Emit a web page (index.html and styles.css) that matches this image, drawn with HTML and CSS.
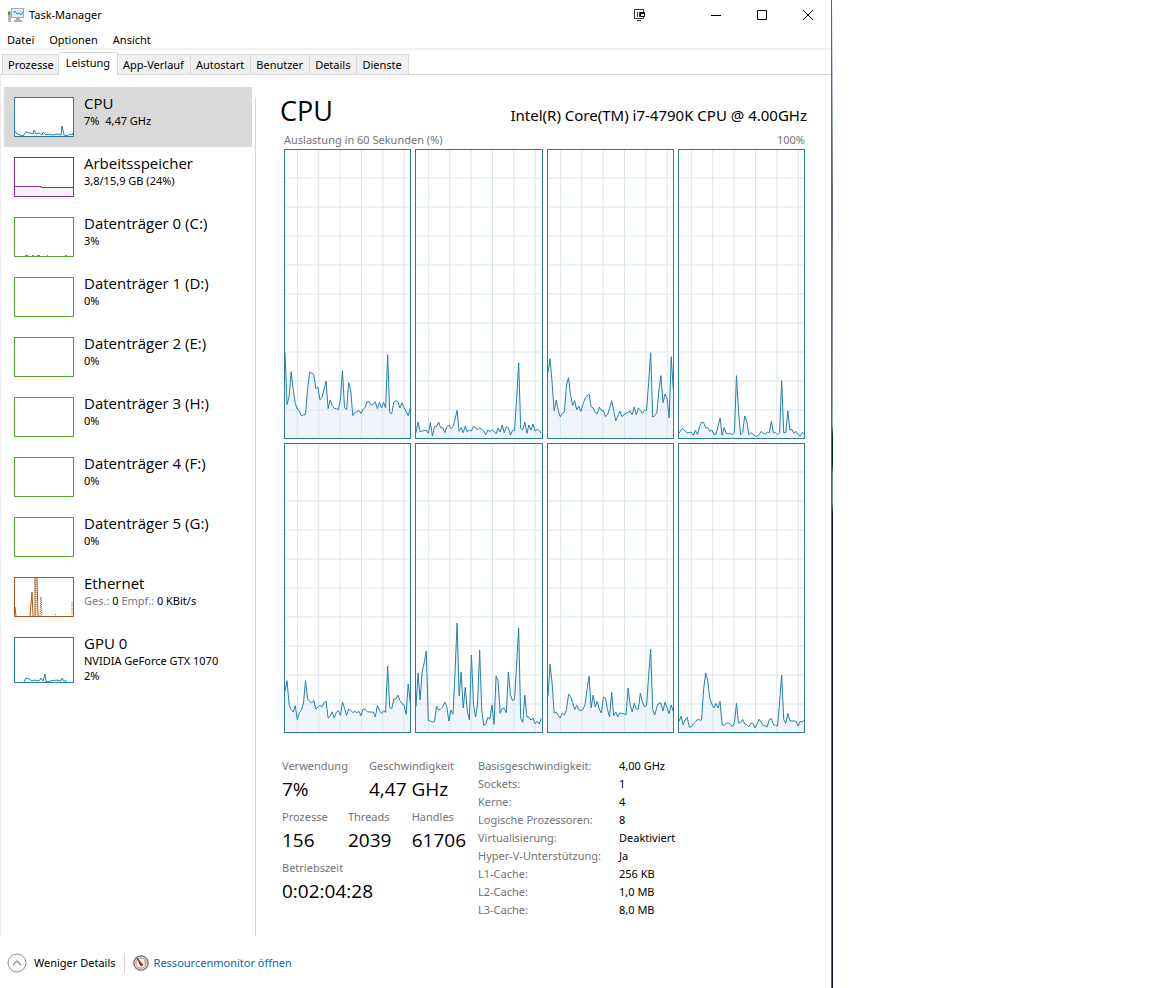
FILE: index.html
```
<!DOCTYPE html>
<html lang="de">
<head>
	<meta charset="UTF-8">
	<title>Task-Manager</title>
	<link rel="stylesheet" href="styles.css">
	<script src="charts.js" defer></script>
</head>
<body>
	<div class="window">
		<header class="titlebar">
			<svg class="app-icon" viewBox="0 0 16 15">
				<rect x="0" y="3" width="3" height="11" fill="#b5b9bb"/>
				<rect x="0" y="4" width="2" height="3" fill="#4f8a4c"/>
				<rect x="3.500" y="0.500" width="12" height="9" fill="#d8eefa" stroke="#a3abb0"/>
				<path d="M5 5l2-2 2 3 2-1 2 2 2-3" fill="none" stroke="#2388c5"/>
				<path d="M8 10h4v2h2v2H6v-2h2z" fill="#a8acae"/>
			</svg>
			<h1>Task-Manager</h1>
			<button class="win-btn feedback" aria-label="Feedback">
				<svg viewBox="0 0 12 12"><path d="M.5 .5h9v3M.5 .5v9h9v-2M3.500 3v5M5.500 3v5M3 11.500h4" fill="none" stroke="#333"/><path d="M6.500 3.500h4v4h-4z" fill="#fff" stroke="#000"/><path d="M6 3h5v2H6z"/></svg>
			</button>
			<button class="win-btn" aria-label="Minimieren">
				<svg viewBox="0 0 12 12"><path d="M1 6.500h10" stroke="#000"/></svg>
			</button>
			<button class="win-btn" aria-label="Maximieren">
				<svg viewBox="0 0 12 12"><path d="M1.500 1.500h9v9h-9z" fill="none" stroke="#000"/></svg>
			</button>
			<button class="win-btn" aria-label="Schließen">
				<svg viewBox="0 0 12 12"><path d="M1 1l10 10M11 1L1 11" stroke="#000"/></svg>
			</button>
		</header>

		<nav class="menu">
			<button>Datei</button>
			<button>Optionen</button>
			<button>Ansicht</button>
		</nav>

		<div class="tabs" role="tablist">
			<button role="tab">Prozesse</button>
			<button role="tab" class="active" aria-selected="true">Leistung</button>
			<button role="tab">App-Verlauf</button>
			<button role="tab">Autostart</button>
			<button role="tab">Benutzer</button>
			<button role="tab">Details</button>
			<button role="tab">Dienste</button>
		</div>

		<div class="content">
			<ul class="sidebar">
				<li><button class="item selected">
					<svg class="thumb blue" viewBox="0 0 58 38"><path d="M0 33l2 3 3 1 3 1 3-4 4 1 3 1 1-4 2 4 3-1 3 2 1-3 3 3 3-1 4 1 4-1 4 1 1-9 2 9 3 1 3-2 2 1 1-2"/></svg>
					<span class="info"><b>CPU</b><small>7%&nbsp; 4,47 GHz</small></span>
				</button></li>
				<li><button class="item">
					<svg class="thumb purple" viewBox="0 0 58 38"><path class="fill" d="M0 28.500h26v1h32V38H0z"/><path d="M0 28.500h26v1h32"/></svg>
					<span class="info"><b>Arbeitsspeicher</b><small>3,8/15,9 GB (24%)</small></span>
				</button></li>
				<li><button class="item">
					<svg class="thumb green" viewBox="0 0 58 38"><path d="M10 37.500h3M17 37.500h2M22 37.500h3M32 37.500h1M50 37.500h2"/></svg>
					<span class="info"><b>Datenträger 0 (C:)</b><small>3%</small></span>
				</button></li>
				<li><button class="item">
					<svg class="thumb green" viewBox="0 0 58 38"></svg>
					<span class="info"><b>Datenträger 1 (D:)</b><small>0%</small></span>
				</button></li>
				<li><button class="item">
					<svg class="thumb green" viewBox="0 0 58 38"></svg>
					<span class="info"><b>Datenträger 2 (E:)</b><small>0%</small></span>
				</button></li>
				<li><button class="item">
					<svg class="thumb green" viewBox="0 0 58 38"></svg>
					<span class="info"><b>Datenträger 3 (H:)</b><small>0%</small></span>
				</button></li>
				<li><button class="item">
					<svg class="thumb green" viewBox="0 0 58 38"></svg>
					<span class="info"><b>Datenträger 4 (F:)</b><small>0%</small></span>
				</button></li>
				<li><button class="item">
					<svg class="thumb green" viewBox="0 0 58 38"></svg>
					<span class="info"><b>Datenträger 5 (G:)</b><small>0%</small></span>
				</button></li>
				<li><button class="item">
					<svg class="thumb orange" viewBox="0 0 58 38"><path d="M0 29l1 9M15 38l2-24 1 24M20 38V0M22 0l1 38"/><path stroke-dasharray="1 1" d="M21 0v38M25 38l1-19 1 19M40 36l1 1M57 24v14"/></svg>
					<span class="info"><b>Ethernet</b><small><i>Ges.:</i> 0 <i>Empf.:</i> 0 KBit/s</small></span>
				</button></li>
				<li><button class="item">
					<svg class="thumb blue tall" viewBox="0 0 58 44"><path d="M9 44l2-4 3 1 3 2 3-1 2 1 3-1 1-2 2 3 2-7 1 8 5-1 1-1 1 1 3-1 5 1 1-3 2 3h3"/></svg>
					<span class="info"><b>GPU 0</b><small>NVIDIA GeForce GTX 1070<br>2%</small></span>
				</button></li>
			</ul>

			<main class="detail">
				<div class="heading">
					<h2>CPU</h2>
					<span>Intel(R) Core(TM) i7-4790K CPU @ 4.00GHz</span>
				</div>
				<div class="caption"><span>Auslastung in 60 Sekunden (%)</span><span>100%</span></div>

				<div class="charts" id="charts"></div>

				<div class="stats">
					<div class="live">
						<dl>
							<div class="wide"><dt>Verwendung</dt><dd>7%</dd></div>
							<div><dt>Geschwindigkeit</dt><dd>4,47 GHz</dd></div>
						</dl>
						<dl>
							<div><dt>Prozesse</dt><dd>156</dd></div>
							<div><dt>Threads</dt><dd>2039</dd></div>
							<div><dt>Handles</dt><dd>61706</dd></div>
						</dl>
						<dl>
							<div><dt>Betriebszeit</dt><dd>0:02:04:28</dd></div>
						</dl>
					</div>
					<dl class="specs">
						<dt>Basisgeschwindigkeit:</dt><dd>4,00 GHz</dd>
						<dt>Sockets:</dt><dd>1</dd>
						<dt>Kerne:</dt><dd>4</dd>
						<dt>Logische Prozessoren:</dt><dd>8</dd>
						<dt>Virtualisierung:</dt><dd>Deaktiviert</dd>
						<dt>Hyper-V-Unterstützung:</dt><dd>Ja</dd>
						<dt>L1-Cache:</dt><dd>256 KB</dd>
						<dt>L2-Cache:</dt><dd>1,0 MB</dd>
						<dt>L3-Cache:</dt><dd>8,0 MB</dd>
					</dl>
				</div>
			</main>
		</div>

		<footer class="footer">
			<button class="less">
				<svg viewBox="0 0 20 20"><circle cx="10" cy="10" r="9" fill="#fff" stroke="#8c8c8c"/><path d="M6 12l4-4 4 4" fill="none" stroke="#999" stroke-width="1.500"/></svg>
				Weniger Details
			</button>
			<a href="#">
				<svg viewBox="0 0 16 16"><circle cx="8" cy="8" r="7.200" fill="#d9d5d2" stroke="#77716d" stroke-width="1.300"/><circle cx="8" cy="8" r="5" fill="#fff" stroke="#a39d98"/><path d="M4 3l6 7-2 1z" fill="#cf1414" stroke="#cf1414"/><path d="M11 4.500q2 2 1 5" fill="none" stroke="#d58a55"/></svg>
				<span>Ressourcenmonitor öffnen</span>
			</a>
		</footer>
	</div>
	<div class="desktop"></div>
</body>
</html>
```
FILE: styles.css
```
* {
	box-sizing: border-box;
}
body, h1, h2, ul, dl, dt, dd {
	margin: 0;
	padding: 0;
}
body {
	display: grid;
	grid-template-columns: 13fr 5fr;
	min-height: 100vh;
	background: #fff;
	color: #000;
	font: 11px/16px "Noto Sans", "Open Sans", sans-serif;
}
button {
	padding: 0;
	border: 0;
	background: none;
	color: inherit;
	font: inherit;
	text-align: left;
}
svg {
	display: block;
}

.window {
	display: flex;
	flex-direction: column;
	min-width: 0;
	border-right: 1px solid #2b7d96;
}
/* edge of the desktop behind the window */
.desktop {
	background: linear-gradient(#fff 0, #9ab 12%, #667 20%, #9ab 43%, #123 44%, #123 47%, #789 48%, #789 51%, #0a1420 52%) no-repeat;
	background-size: 1px 100%;
}

.titlebar {
	display: flex;
	align-items: center;
	height: 30px;
	padding-left: 8px;
}
.app-icon {
	width: 16px;
	height: 15px;
	margin-right: 5px;
}
.titlebar h1 {
	flex: 1;
	font-size: 11px;
	font-weight: normal;
}
.win-btn {
	display: flex;
	justify-content: center;
	width: 46px;
}
.win-btn svg {
	width: 12px;
	height: 12px;
}
.feedback {
	margin-right: 30px;
}

.menu {
	display: flex;
	gap: 15px;
	height: 20px;
	padding: 2px 7px 0;
	border-bottom: 2px solid #f2f2f2;
}
.menu button {
	line-height: 16px;
}

.tabs {
	display: flex;
	align-items: flex-end;
	height: 25px;
	padding-left: 2px;
	border-bottom: 1px solid #d9d9d9;
}
.tabs button {
	height: 20px;
	padding: 0 6px 0 5px;
	border: 1px solid #d9d9d9;
	border-width: 1px 1px 0 0;
	background: #f0f0f0;
}
.tabs button:first-child {
	padding-right: 4px;
	border-left-width: 1px;
}
.tabs .active {
	height: 23px;
	margin-bottom: -1px;
	padding: 0 7px 2px;
	background: #fff;
}

.content {
	display: flex;
	flex: 1;
	border-left: 1px solid #ececec;
}
.sidebar {
	position: relative;
	width: 255px;
	padding: 12px 4px 0 3px;
	list-style: none;
}
.sidebar::after {
	content: "";
	position: absolute;
	top: 22px;
	right: 0;
	bottom: 0;
	border-right: 1px solid #d5d5d5;
}
.item {
	display: flex;
	gap: 10px;
	width: 100%;
	min-height: 60px;
	padding: 6px 0 0 10px;
}
.selected {
	background: #d9d9d9;
}
.thumb {
	width: 60px;
	height: 40px;
	margin-top: 4px;
	border: 1px solid;
	background: #fff;
	fill: none;
	stroke: currentColor;
}
.tall {
	height: 46px;
}
.blue {
	color: #2580aa;
}
.purple {
	color: #8b2d9c;
}
.purple .fill {
	fill: #f4f2f4;
	stroke: none;
}
.green {
	color: #5aa02c;
}
.orange {
	color: #a75a1c;
}
.info b {
	display: block;
	font-family: "Open Sans", sans-serif;
	font-size: 15px;
	font-weight: normal;
	line-height: 20px;
}
.info small {
	display: block;
	font-size: 11px;
	line-height: 15px;
}
.info i {
	color: #777;
	font-style: normal;
}

.detail {
	display: flex;
	flex: 1;
	flex-direction: column;
	min-width: 0;
	padding: 17px 26px 17px 28px;
}
.heading {
	display: flex;
	align-items: baseline;
	justify-content: space-between;
	height: 40px;
	margin: 0 -2px 0 -4px;
	font-size: 15px;
	line-height: 40px;
}
.heading h2 {
	font-family: "Open Sans", sans-serif;
	font-size: 27px;
	font-weight: normal;
	line-height: 38px;
}
.caption {
	display: flex;
	justify-content: space-between;
	padding-bottom: 2px;
	color: #737373;
	line-height: 15px;
}
.charts {
	display: grid;
	flex: 1;
	grid-template: repeat(2, minmax(0, 1fr)) / repeat(4, minmax(0, 1fr));
	gap: 4px;
	min-height: 400px;
}
.charts svg {
	width: 100%;
	height: 0;
	min-height: 100%;
	border: 1px solid #2a7ba5;
}
.charts path {
	fill: none;
	vector-effect: non-scaling-stroke;
}
.charts .grid {
	stroke: #d9e6ee;
	shape-rendering: crispEdges;
}
.charts .area {
	fill: #eff5fa;
}
.charts .line {
	stroke: #2580b0;
}

.stats {
	display: flex;
	margin: 24px 0 0 -2px;
}
.live {
	width: 196px;
}
.live dl {
	display: flex;
	justify-content: space-between;
	height: 51px;
	padding-right: 12px;
}
.live .wide {
	width: 87px;
}
.live .wide + div {
	flex: 1;
}
.live dt, .specs dt {
	color: #737373;
	line-height: 18px;
}
.live dd {
	font-family: "Open Sans", sans-serif;
	font-size: 19px;
	line-height: 28px;
}
.specs {
	display: grid;
	grid-template-columns: 141px auto;
	line-height: 18px;
}

.footer {
	display: flex;
	align-items: center;
	height: 52px;
	padding: 2px 7px 0;
}
.less {
	display: flex;
	align-items: center;
	gap: 7px;
	padding-right: 8px;
	border-right: 1px solid #d5d5d5;
}
.less svg {
	width: 20px;
	height: 20px;
}
.footer a {
	display: flex;
	align-items: center;
	gap: 5px;
	margin-left: 8px;
	color: #0a63b8;
	text-decoration: none;
}
.footer a svg {
	width: 16px;
	height: 16px;
}
```
FILE: charts.js
```
// load per logical processor, oldest sample first, full scale = 864
var cores = [
	[256,100,124,199,146,104,86,81,66,70,70,146,198,194,191,148,153,115,121,146,171,88,114,98,89,88,85,116,202,91,85,166,144,67,77,79,83,74,85,92,109,109,98,102,108,88,107,90,107,90,250,76,73,108,112,109,90,106,91,79,67,91],
	[16,48,19,21,22,24,14,46,6,34,34,48,31,31,16,34,39,28,34,56,83,20,31,16,35,18,24,21,35,31,24,30,26,21,10,24,19,25,19,13,30,18,39,16,34,30,9,23,23,116,226,28,24,48,14,39,24,42,21,26,23,14],
	[196,238,166,82,114,82,64,74,79,159,181,128,98,112,84,96,80,100,118,126,132,94,90,76,73,93,82,82,64,70,88,112,82,51,66,81,64,70,74,78,81,70,93,69,90,84,74,83,83,166,256,63,67,76,141,187,106,132,118,60,244,146],
	[14,24,28,20,16,16,18,8,24,10,34,48,46,31,31,20,24,10,12,34,60,8,31,14,13,13,10,16,187,80,10,16,66,50,10,16,12,6,5,10,20,14,12,18,16,50,16,16,10,16,172,16,16,82,24,26,14,20,10,6,16,14],
	[122,154,82,67,60,79,37,59,65,87,154,99,92,87,95,69,75,80,75,88,92,42,47,61,42,59,64,50,90,72,50,69,65,58,62,58,62,49,69,68,61,60,60,60,45,80,65,55,64,59,198,74,70,99,99,111,94,85,81,53,144,87],
	[77,177,96,182,207,243,34,33,30,31,78,66,69,75,89,76,33,66,53,177,327,108,180,72,134,62,36,231,82,45,87,246,67,20,24,44,39,81,23,168,154,56,71,71,58,180,112,94,98,202,312,41,29,111,45,45,36,42,25,32,24,41],
	[107,204,147,57,60,50,42,57,51,67,114,106,89,67,80,67,64,67,82,127,168,72,111,75,92,68,57,105,102,67,45,120,49,60,46,58,55,55,51,132,82,60,86,69,69,117,90,76,80,167,249,67,51,75,87,87,63,90,72,55,81,62],
	[32,47,22,36,44,15,16,24,30,38,36,36,130,177,154,100,84,72,86,72,92,22,20,26,27,24,16,28,86,27,28,38,24,22,16,26,26,12,24,38,30,20,18,16,38,40,22,20,18,90,171,38,26,56,34,33,33,32,18,32,30,36]
];

var W = 375;
var H = 864;
var grid = "";

for (var x = 37; x < W; x += 64) {
	grid += "M" + x + " 0V" + H;
}
for (var y = 84; y < H; y += 87) {
	grid += "M0 " + y + "H" + W;
}

document.getElementById("charts").innerHTML = cores.map(function(data) {
	var points = data.map(function(value, i) {
		return (i * W / (data.length - 1)).toFixed(1) + " " + (H - value);
	}).join("L");

	return '<svg viewBox="0 0 ' + W + ' ' + H + '" preserveAspectRatio="none">' +
		'<path class="area" d="M0 ' + H + 'L' + points + 'V' + H + 'z"/>' +
		'<path class="grid" d="' + grid + '"/>' +
		'<path class="line" d="M' + points + '"/></svg>';
}).join("");
```
